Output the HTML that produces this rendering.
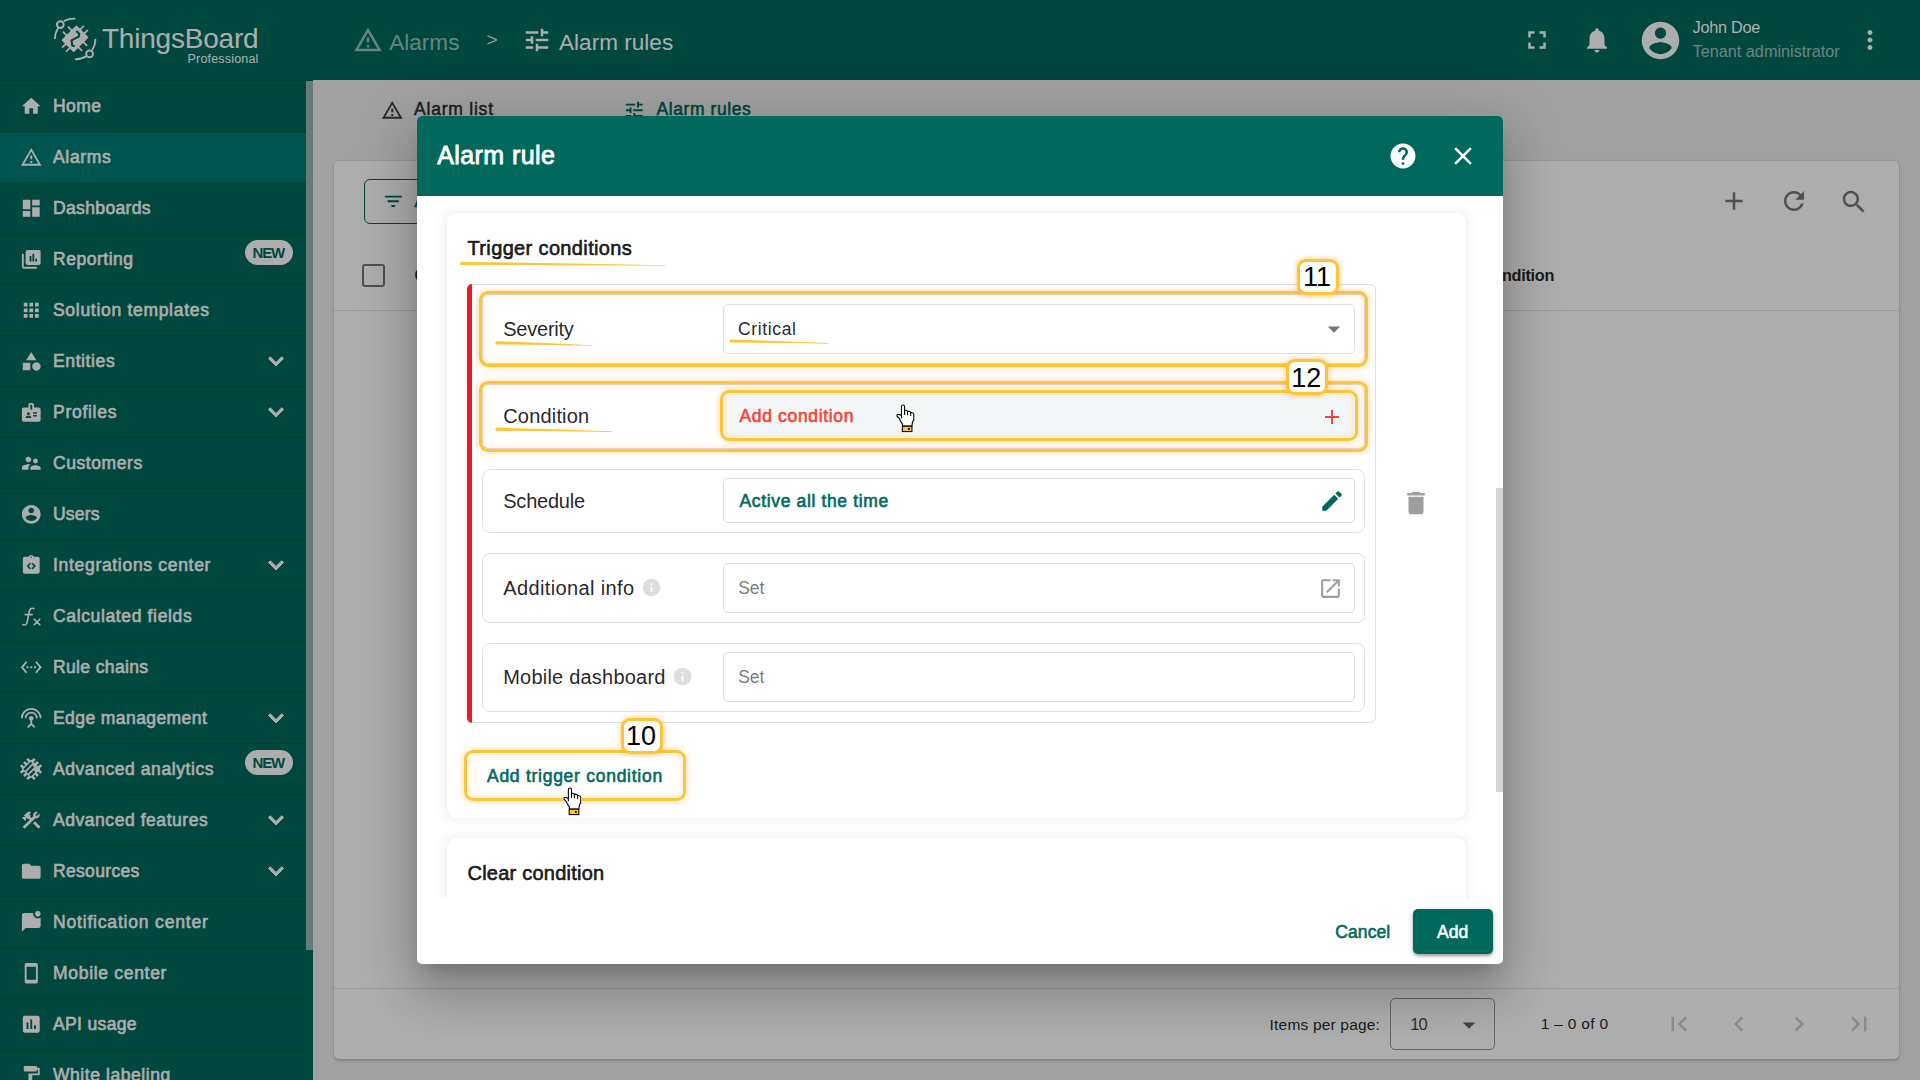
<!DOCTYPE html>
<html lang="en"><head><meta charset="utf-8"><title>ThingsBoard - Alarm rule</title>
<style>html,body{margin:0;padding:0}body{width:1920px;height:1080px;overflow:hidden;position:relative;background:#eee;font-family:"Liberation Sans",Arial,sans-serif}
.t{position:absolute;white-space:nowrap;line-height:1;display:block}
.b{position:absolute}.i{position:absolute;display:block;overflow:visible}
#base,#dlg,#ann,#bd{position:absolute;left:0;top:0;width:1920px;height:1080px;overflow:hidden}
#bd{background:rgba(0,0,0,.32)}
#dshadow{position:absolute;left:417px;top:116px;width:1086px;height:847.75px;border-radius:5px;background:#fff;box-shadow:0 14px 19px -9px rgba(0,0,0,.2),0 30px 48px 4px rgba(0,0,0,.14),0 11px 58px 10px rgba(0,0,0,.12)}</style></head><body>
<div id="base">
<div class="b" style="left:0.00px;top:0.00px;width:1920.00px;height:1080.00px;background:#eee;"></div>
<div class="b" style="left:0.00px;top:0.00px;width:1920.00px;height:80.00px;background:#00695c;"></div>
<div class="b" style="left:0.00px;top:80.00px;width:313.00px;height:1000.00px;background:#00695c;"></div>
<svg class="i" style="left:46px;top:10px;width:60px;height:60px" viewBox="46 10 60 60">
<g fill="none" stroke="#fff" stroke-width="1.900" stroke-linecap="round">
<circle cx="60.300" cy="24.600" r="3.400"/><circle cx="89.600" cy="53.900" r="3.400"/>
<path d="M64.400 20.900 A20.300 20.300 0 0 1 74.600 18.600"/>
<path d="M57.800 28.400 A20.300 20.300 0 0 0 54.900 38.300"/>
<path d="M92.500 49.600 A20.300 20.300 0 0 0 95.400 39.700"/>
<path d="M85.800 56.600 A20.300 20.300 0 0 1 75.700 59.200"/>
</g>
<g transform="translate(75 38.750) rotate(-45)">
<rect x="-10.600" y="-8.700" width="21.200" height="17.400" rx="1.200" fill="#fff"/>
<path stroke="#fff" stroke-width="1.700" stroke-linecap="round" d="M-3.600 -8v-4.900M3.600 -8v-4.900M-3.600 8v4.900M3.600 8v4.900M10 -2.850h4.800M10 2.850h4.800M-10 -2.850h-4.800M-10 2.850h-4.800"/>
</g>
<path d="M76.900 31.600 L79.200 33.800 L78.700 36.600 L71.500 40.400 L72.200 45.400 L73.800 46" fill="none" stroke="#00695c" stroke-width="2.100" stroke-linecap="round" stroke-linejoin="round"/>
</svg>
<span class="t" id="t1" style="left:101.90px;top:25.00px;font-size:28px;color:#fff;letter-spacing:-0.206px;">ThingsBoard</span>
<span class="t" id="t2" style="left:187.50px;top:53.00px;font-size:12.5px;color:#fff;letter-spacing:0.192px;">Professional</span>
<svg class="i" style="left:353.00px;top:24.70px;width:30px;height:30px;" viewBox="0 0 24 24"><path fill="rgba(255,255,255,.6)" d="M12 5.99L19.53 19H4.47L12 5.99M12 2L1 21h22L12 2zm1 14h-2v2h2v-2zm0-6h-2v4h2v-4z"/></svg>
<span class="t" id="t3" style="left:389.30px;top:32.00px;font-size:22.5px;color:rgba(255,255,255,.6);letter-spacing:0.015px;">Alarms</span>
<span class="t" id="t4" style="left:486.40px;top:30.00px;font-size:19px;color:rgba(255,255,255,.85);letter-spacing:-1.423px;">&gt;</span>
<svg class="i" style="left:522.30px;top:24.70px;width:30px;height:30px;" viewBox="0 0 24 24"><path fill="#fff" d="M3 17v2h6v-2H3zM3 5v2h10V5H3zm10 16v-2h8v-2h-8v-2h-2v6h2zM7 9v2H3v2h4v2h2V9H7zm14 4v-2H11v2h10zm-6-4h2V7h4V5h-4V3h-2v6z"/></svg>
<span class="t" id="t5" style="left:559.00px;top:32.00px;font-size:22.5px;color:#fff;letter-spacing:0.040px;">Alarm rules</span>
<svg class="i" style="left:1522.30px;top:24.80px;width:30px;height:30px;" viewBox="0 0 24 24"><path fill="#fff" d="M7 14H5v5h5v-2H7v-3zm-2-4h2V7h3V5H5v5zm12 7h-3v2h5v-5h-2v3zM14 5v2h3v3h2V5h-5z"/></svg>
<svg class="i" style="left:1582.30px;top:25.00px;width:30px;height:30px;" viewBox="0 0 24 24"><path fill="#fff" d="M12 22c1.100 0 2-.9 2-2h-4c0 1.100.890 2 2 2zm6-6v-5c0-3.070-1.640-5.640-4.500-6.320V4c0-.830-.670-1.500-1.500-1.500s-1.500.670-1.500 1.500v.680C7.630 5.360 6 7.920 6 11v5l-2 2v1h16v-1l-2-2z"/></svg>
<svg class="i" style="left:1637.50px;top:18.00px;width:45px;height:45px;" viewBox="0 0 24 24"><path fill="#fff" d="M12 2C6.480 2 2 6.480 2 12s4.480 10 10 10 10-4.480 10-10S17.520 2 12 2zm0 3c1.660 0 3 1.340 3 3s-1.340 3-3 3-3-1.340-3-3 1.340-3 3-3zm0 14.200c-2.500 0-4.710-1.280-6-3.220.030-1.990 4-3.080 6-3.080 1.990 0 5.970 1.090 6 3.080-1.290 1.940-3.500 3.220-6 3.220z"/></svg>
<span class="t" id="t6" style="left:1692.50px;top:19.00px;font-size:16.25px;color:#fff;letter-spacing:-0.236px;">John Doe</span>
<span class="t" id="t7" style="left:1692.50px;top:43.00px;font-size:16.25px;color:rgba(255,255,255,.62);letter-spacing:0.001px;">Tenant administrator</span>
<svg class="i" style="left:1854.70px;top:25.20px;width:30px;height:30px;" viewBox="0 0 24 24"><path fill="#fff" d="M12 8c1.100 0 2-.9 2-2s-.9-2-2-2-2 .9-2 2 .9 2 2 2zm0 2c-1.100 0-2 .9-2 2s.9 2 2 2 2-.9 2-2-.9-2-2-2zm0 6c-1.100 0-2 .9-2 2s.9 2 2 2 2-.9 2-2-.9-2-2-2z"/></svg>
<div class="b" style="left:0.00px;top:131.00px;width:306.00px;height:1.00px;background:rgba(0,0,0,.12);"></div>
<svg class="i" style="left:19.75px;top:94.75px;width:22.5px;height:22.5px;" viewBox="0 0 24 24"><path fill="#fff" d="M10 20v-6h4v6h5v-8h3L12 3 2 12h3v8z"/></svg>
<span class="t" id="t8" style="left:53.00px;top:98.00px;font-size:17.5px;color:#fff;letter-spacing:0.447px;-webkit-text-stroke:0.58px #fff;">Home</span>
<div class="b" style="left:0.00px;top:132.70px;width:306.00px;height:50.30px;background:#007f73;"></div>
<div class="b" style="left:0.00px;top:182.00px;width:306.00px;height:1.00px;background:rgba(0,0,0,.12);"></div>
<svg class="i" style="left:19.75px;top:145.75px;width:22.5px;height:22.5px;" viewBox="0 0 24 24"><path fill="#fff" d="M12 5.99L19.53 19H4.47L12 5.99M12 2L1 21h22L12 2zm1 14h-2v2h2v-2zm0-6h-2v4h2v-4z"/></svg>
<span class="t" id="t9" style="left:53.00px;top:149.00px;font-size:17.5px;color:#fff;letter-spacing:0.681px;-webkit-text-stroke:0.58px #fff;">Alarms</span>
<div class="b" style="left:0.00px;top:233.00px;width:306.00px;height:1.00px;background:rgba(0,0,0,.12);"></div>
<svg class="i" style="left:19.75px;top:196.75px;width:22.5px;height:22.5px;" viewBox="0 0 24 24"><path fill="#fff" d="M3 13h8V3H3v10zm0 8h8v-6H3v6zm10 0h8V11h-8v10zm0-18v6h8V3h-8z"/></svg>
<span class="t" id="t10" style="left:53.00px;top:200.00px;font-size:17.5px;color:#fff;letter-spacing:0.361px;-webkit-text-stroke:0.58px #fff;">Dashboards</span>
<div class="b" style="left:0.00px;top:284.00px;width:306.00px;height:1.00px;background:rgba(0,0,0,.12);"></div>
<svg class="i" style="left:19.75px;top:247.75px;width:22.5px;height:22.5px;" viewBox="0 0 24 24"><path fill="#fff" fill-rule="evenodd" d="M4 6H2v14c0 1.1.9 2 2 2h14v-2H4V6z M20 2H8c-1.1 0-2 .9-2 2v12c0 1.1.9 2 2 2h12c1.1 0 2-.9 2-2V4c0-1.1-.9-2-2-2z M10.2 8.5h2v6h-2z M13.2 6h2v8.500h-2z M16.2 11.5h2v3h-2z"/></svg>
<span class="t" id="t11" style="left:53.00px;top:251.00px;font-size:17.5px;color:#fff;letter-spacing:0.519px;-webkit-text-stroke:0.58px #fff;">Reporting</span>
<div class="b" style="left:244.70px;top:240.00px;width:48.60px;height:24.50px;background:#fff;border-radius:13px;"></div>
<span class="t" id="t12" style="left:252.50px;top:245.00px;font-size:15px;color:#00695c;letter-spacing:-1.121px;font-weight:700;">NEW</span>
<div class="b" style="left:0.00px;top:335.00px;width:306.00px;height:1.00px;background:rgba(0,0,0,.12);"></div>
<svg class="i" style="left:19.75px;top:298.75px;width:22.5px;height:22.5px;" viewBox="0 0 24 24"><path fill="#fff" d="M4 8h4V4H4v4zm6 12h4v-4h-4v4zm-6 0h4v-4H4v4zm0-6h4v-4H4v4zm6 0h4v-4h-4v4zm6-10v4h4V4h-4zm-6 4h4V4h-4v4zm6 6h4v-4h-4v4zm0 6h4v-4h-4v4z"/></svg>
<span class="t" id="t13" style="left:53.00px;top:302.00px;font-size:17.5px;color:#fff;letter-spacing:0.701px;-webkit-text-stroke:0.58px #fff;">Solution templates</span>
<div class="b" style="left:0.00px;top:386.00px;width:306.00px;height:1.00px;background:rgba(0,0,0,.12);"></div>
<svg class="i" style="left:19.75px;top:349.75px;width:22.5px;height:22.5px;" viewBox="0 0 24 24"><path fill="#fff" d="M12 2l-5.500 9h11z M17.500 13a4.500 4.500 0 1 0 .001 0z M3 13.500h8v8H3z"/></svg>
<span class="t" id="t14" style="left:53.00px;top:353.00px;font-size:17.5px;color:#fff;letter-spacing:0.614px;-webkit-text-stroke:0.58px #fff;">Entities</span>
<svg class="i" style="left:260.75px;top:346.10px;width:30px;height:30px;stroke:#fff;stroke-width:.8px;" viewBox="0 0 24 24"><path fill="#fff" d="M16.590 8.590L12 13.170 7.410 8.590 6 10l6 6 6-6z"/></svg>
<div class="b" style="left:0.00px;top:437.00px;width:306.00px;height:1.00px;background:rgba(0,0,0,.12);"></div>
<svg class="i" style="left:19.75px;top:400.75px;width:22.5px;height:22.5px;" viewBox="0 0 24 24"><path fill="#fff" d="M20 7h-5V4c0-1.100-.9-2-2-2h-2c-1.100 0-2 .9-2 2v3H4c-1.100 0-2 .9-2 2v11c0 1.100.9 2 2 2h16c1.100 0 2-.9 2-2V9c0-1.100-.9-2-2-2zM9 12c.830 0 1.500.670 1.500 1.500S9.830 15 9 15s-1.500-.670-1.500-1.500S8.170 12 9 12zm3 6H6v-.750c0-1 2-1.500 3-1.500s3 .5 3 1.500V18zm1-9h-2V4h2v5zm5 7.500h-4V15h4v1.500zm0-3h-4V12h4v1.500z"/></svg>
<span class="t" id="t15" style="left:53.00px;top:404.00px;font-size:17.5px;color:#fff;letter-spacing:0.719px;-webkit-text-stroke:0.58px #fff;">Profiles</span>
<svg class="i" style="left:260.75px;top:397.10px;width:30px;height:30px;stroke:#fff;stroke-width:.8px;" viewBox="0 0 24 24"><path fill="#fff" d="M16.590 8.590L12 13.170 7.410 8.590 6 10l6 6 6-6z"/></svg>
<div class="b" style="left:0.00px;top:488.00px;width:306.00px;height:1.00px;background:rgba(0,0,0,.12);"></div>
<svg class="i" style="left:19.75px;top:451.75px;width:22.5px;height:22.5px;" viewBox="0 0 24 24"><path fill="#fff" d="M16.500 12c1.380 0 2.490-1.120 2.490-2.500S17.880 7 16.500 7C15.120 7 14 8.120 14 9.500s1.120 2.500 2.500 2.500zM9 11c1.660 0 2.990-1.340 2.990-3S10.660 5 9 5C7.340 5 6 6.340 6 8s1.340 3 3 3zm7.500 3c-1.830 0-5.500.920-5.500 2.750V19h11v-2.250c0-1.830-3.670-2.750-5.500-2.750zM9 13c-2.330 0-7 1.170-7 3.500V19h7v-2.250c0-.850.330-2.340 2.370-3.470C10.500 13.100 9.660 13 9 13z"/></svg>
<span class="t" id="t16" style="left:53.00px;top:455.00px;font-size:17.5px;color:#fff;letter-spacing:0.576px;-webkit-text-stroke:0.58px #fff;">Customers</span>
<div class="b" style="left:0.00px;top:539.00px;width:306.00px;height:1.00px;background:rgba(0,0,0,.12);"></div>
<svg class="i" style="left:19.75px;top:502.75px;width:22.5px;height:22.5px;" viewBox="0 0 24 24"><path fill="#fff" d="M12 2C6.480 2 2 6.480 2 12s4.480 10 10 10 10-4.480 10-10S17.520 2 12 2zm0 3c1.660 0 3 1.340 3 3s-1.340 3-3 3-3-1.340-3-3 1.340-3 3-3zm0 14.200c-2.500 0-4.710-1.280-6-3.220.030-1.990 4-3.080 6-3.080 1.990 0 5.970 1.090 6 3.080-1.290 1.940-3.500 3.220-6 3.220z"/></svg>
<span class="t" id="t17" style="left:53.00px;top:506.00px;font-size:17.5px;color:#fff;letter-spacing:0.177px;-webkit-text-stroke:0.58px #fff;">Users</span>
<div class="b" style="left:0.00px;top:590.00px;width:306.00px;height:1.00px;background:rgba(0,0,0,.12);"></div>
<svg class="i" style="left:19.75px;top:553.75px;width:22.5px;height:22.5px;" viewBox="0 0 24 24"><path fill="#fff" fill-rule="evenodd" d="M19 3h-4.180C14.400 1.840 13.300 1 12 1s-2.400.840-2.820 2H5c-1.100 0-2 .9-2 2v14c0 1.100.9 2 2 2h14c1.100 0 2-.9 2-2V5c0-1.100-.9-2-2-2zM12 2.750c.41 0 .75.340.75.750s-.34.750-.75.750-.75-.340-.75-.750.340-.750.750-.750z M10.600 9.300 7 12.900l3.600 3.600 1.200-1.200-2.400-2.400 2.400-2.400z M13.400 9.300 17 12.900l-3.600 3.600-1.200-1.200 2.400-2.400-2.400-2.400z"/></svg>
<span class="t" id="t18" style="left:53.00px;top:557.00px;font-size:17.5px;color:#fff;letter-spacing:0.691px;-webkit-text-stroke:0.58px #fff;">Integrations center</span>
<svg class="i" style="left:260.75px;top:550.10px;width:30px;height:30px;stroke:#fff;stroke-width:.8px;" viewBox="0 0 24 24"><path fill="#fff" d="M16.590 8.590L12 13.170 7.410 8.590 6 10l6 6 6-6z"/></svg>
<div class="b" style="left:0.00px;top:641.00px;width:306.00px;height:1.00px;background:rgba(0,0,0,.12);"></div>
<svg class="i" style="left:20px;top:604.50px;width:23px;height:23px" viewBox="0 0 23 23"><g fill="none" stroke="#fff" stroke-width="1.600" stroke-linecap="round"><path d="M13.800 3.600c-2.600-1-4 .4-4.500 2.800L7.200 17.200c-.5 2.300-2 3.300-4.300 2.400"/><path d="M5.200 9.600h7"/><path d="M14.200 14.200l5.600 5.600M19.800 14.200l-5.600 5.600"/></g></svg>
<span class="t" id="t19" style="left:53.00px;top:608.00px;font-size:17.5px;color:#fff;letter-spacing:0.642px;-webkit-text-stroke:0.58px #fff;">Calculated fields</span>
<div class="b" style="left:0.00px;top:692.00px;width:306.00px;height:1.00px;background:rgba(0,0,0,.12);"></div>
<svg class="i" style="left:19.75px;top:655.75px;width:22.5px;height:22.5px;" viewBox="0 0 24 24"><path fill="#fff" d="M7.770 6.760L6.230 5.480.820 12l5.410 6.520 1.540-1.280L3.420 12l4.350-5.240zM7 13h2v-2H7v2zm10-2h-2v2h2v-2zm-6 2h2v-2h-2v2zm6.770-7.520l-1.540 1.280L20.580 12l-4.350 5.240 1.540 1.280L23.180 12l-5.410-6.520z"/></svg>
<span class="t" id="t20" style="left:53.00px;top:659.00px;font-size:17.5px;color:#fff;letter-spacing:0.363px;-webkit-text-stroke:0.58px #fff;">Rule chains</span>
<div class="b" style="left:0.00px;top:743.00px;width:306.00px;height:1.00px;background:rgba(0,0,0,.12);"></div>
<svg class="i" style="left:19.75px;top:706.75px;width:22.5px;height:22.5px;" viewBox="0 0 24 24"><path fill="#fff" d="M12 5c-3.870 0-7 3.130-7 7h2c0-2.760 2.240-5 5-5s5 2.240 5 5h2c0-3.870-3.130-7-7-7zm1 9.290c.880-.390 1.500-1.260 1.500-2.290 0-1.380-1.120-2.500-2.500-2.500S9.500 10.620 9.500 12c0 1.020.620 1.900 1.500 2.290v3.300L7.590 21 9 22.410l3-3 3 3L16.410 21 13 17.590v-3.300zM12 1C5.930 1 1 5.930 1 12h2c0-4.970 4.030-9 9-9s9 4.030 9 9h2c0-6.070-4.930-11-11-11z"/></svg>
<span class="t" id="t21" style="left:53.00px;top:710.00px;font-size:17.5px;color:#fff;letter-spacing:0.422px;-webkit-text-stroke:0.58px #fff;">Edge management</span>
<svg class="i" style="left:260.75px;top:703.10px;width:30px;height:30px;stroke:#fff;stroke-width:.8px;" viewBox="0 0 24 24"><path fill="#fff" d="M16.590 8.590L12 13.170 7.410 8.590 6 10l6 6 6-6z"/></svg>
<div class="b" style="left:0.00px;top:794.00px;width:306.00px;height:1.00px;background:rgba(0,0,0,.12);"></div>
<svg class="i" style="left:19.20px;top:757.00px;width:24px;height:24px" viewBox="-12 -12 24 24"><g transform="rotate(-45)" fill="#fff"><rect x="-6.750" y="-6.750" width="13.500" height="13.500" rx="1"/><rect x="6" y="-5.8" width="3.900" height="2.600"/><rect x="-9.900" y="-5.8" width="3.900" height="2.600"/><rect y="6" x="-5.8" height="3.900" width="2.600"/><rect y="-9.900" x="-5.8" height="3.900" width="2.600"/><rect x="6" y="-1.3" width="3.900" height="2.600"/><rect x="-9.900" y="-1.3" width="3.900" height="2.600"/><rect y="6" x="-1.3" height="3.900" width="2.600"/><rect y="-9.900" x="-1.3" height="3.900" width="2.600"/><rect x="6" y="3.2" width="3.900" height="2.600"/><rect x="-9.900" y="3.2" width="3.900" height="2.600"/><rect y="6" x="3.2" height="3.900" width="2.600"/><rect y="-9.900" x="3.2" height="3.900" width="2.600"/><g fill="#00695c"><rect x="-5.400" y="-5.300" width="10.400" height="2.300"/><rect x="-5.400" y="-1.300" width="9" height="2.300"/><rect x="-5.400" y="2.800" width="6.400" height="2.300"/></g></g></svg>
<span class="t" id="t22" style="left:53.00px;top:761.00px;font-size:17.5px;color:#fff;letter-spacing:0.569px;-webkit-text-stroke:0.58px #fff;">Advanced analytics</span>
<div class="b" style="left:244.70px;top:750.00px;width:48.60px;height:24.50px;background:#fff;border-radius:13px;"></div>
<span class="t" id="t23" style="left:252.50px;top:755.00px;font-size:15px;color:#00695c;letter-spacing:-1.121px;font-weight:700;">NEW</span>
<div class="b" style="left:0.00px;top:845.00px;width:306.00px;height:1.00px;background:rgba(0,0,0,.12);"></div>
<svg class="i" style="left:19.75px;top:808.75px;width:22.5px;height:22.5px;" viewBox="0 0 24 24"><path fill="#fff" d="M13.783 15.172l2.121-2.121 5.996 5.996-2.121 2.121zM17.500 10c1.930 0 3.500-1.570 3.500-3.500 0-.580-.160-1.120-.410-1.600l-2.700 2.700-1.490-1.490 2.700-2.700c-.480-.250-1.020-.410-1.600-.410C15.570 3 14 4.570 14 6.500c0 .410.080.8.210 1.160l-1.850 1.850-1.780-1.780.710-.710-1.410-1.410L12 3.490c-1.170-1.170-3.070-1.170-4.240 0L4.220 7.030l1.410 1.410H2.810l-.710.710 3.540 3.540.710-.710V9.150l1.410 1.410.710-.710 1.780 1.780-7.410 7.410 2.120 2.120L16.340 9.790c.360.130.750.210 1.160.210z"/></svg>
<span class="t" id="t24" style="left:53.00px;top:812.00px;font-size:17.5px;color:#fff;letter-spacing:0.550px;-webkit-text-stroke:0.58px #fff;">Advanced features</span>
<svg class="i" style="left:260.75px;top:805.10px;width:30px;height:30px;stroke:#fff;stroke-width:.8px;" viewBox="0 0 24 24"><path fill="#fff" d="M16.590 8.590L12 13.170 7.410 8.590 6 10l6 6 6-6z"/></svg>
<div class="b" style="left:0.00px;top:896.00px;width:306.00px;height:1.00px;background:rgba(0,0,0,.12);"></div>
<svg class="i" style="left:19.75px;top:859.75px;width:22.5px;height:22.5px;" viewBox="0 0 24 24"><path fill="#fff" d="M10 4H4c-1.100 0-1.990.9-1.990 2L2 18c0 1.100.9 2 2 2h16c1.100 0 2-.9 2-2V8c0-1.100-.9-2-2-2h-8l-2-2z"/></svg>
<span class="t" id="t25" style="left:53.00px;top:863.00px;font-size:17.5px;color:#fff;letter-spacing:0.334px;-webkit-text-stroke:0.58px #fff;">Resources</span>
<svg class="i" style="left:260.75px;top:856.10px;width:30px;height:30px;stroke:#fff;stroke-width:.8px;" viewBox="0 0 24 24"><path fill="#fff" d="M16.590 8.590L12 13.170 7.410 8.590 6 10l6 6 6-6z"/></svg>
<div class="b" style="left:0.00px;top:947.00px;width:306.00px;height:1.00px;background:rgba(0,0,0,.12);"></div>
<svg class="i" style="left:19.75px;top:910.75px;width:22.5px;height:22.5px;" viewBox="0 0 24 24"><path fill="#fff" d="M22 6.980V16c0 1.100-.9 2-2 2H6l-4 4V4c0-1.100.9-2 2-2h10.100c-.060.320-.100.660-.100 1 0 2.760 2.240 5 5 5 1.130 0 2.160-.390 3-1.020zM16 3c0 1.660 1.340 3 3 3s3-1.340 3-3-1.340-3-3-3-3 1.340-3 3z"/></svg>
<span class="t" id="t26" style="left:53.00px;top:914.00px;font-size:17.5px;color:#fff;letter-spacing:0.820px;-webkit-text-stroke:0.58px #fff;">Notification center</span>
<div class="b" style="left:0.00px;top:998.00px;width:306.00px;height:1.00px;background:rgba(0,0,0,.12);"></div>
<svg class="i" style="left:19.75px;top:961.75px;width:22.5px;height:22.5px;" viewBox="0 0 24 24"><path fill="#fff" d="M17 1.010L7 1c-1.100 0-2 .9-2 2v18c0 1.100.9 2 2 2h10c1.100 0 2-.9 2-2V3c0-1.100-.9-1.990-2-1.990zM17 19H7V5h10v14z"/></svg>
<span class="t" id="t27" style="left:53.00px;top:965.00px;font-size:17.5px;color:#fff;letter-spacing:0.695px;-webkit-text-stroke:0.58px #fff;">Mobile center</span>
<div class="b" style="left:0.00px;top:1049.00px;width:306.00px;height:1.00px;background:rgba(0,0,0,.12);"></div>
<svg class="i" style="left:19.75px;top:1012.75px;width:22.5px;height:22.5px;" viewBox="0 0 24 24"><path fill="#fff" d="M19 3H5c-1.100 0-2 .9-2 2v14c0 1.100.9 2 2 2h14c1.100 0 2-.9 2-2V5c0-1.100-.9-2-2-2zM9 17H7v-7h2v7zm4 0h-2V7h2v10zm4 0h-2v-4h2v4z"/></svg>
<span class="t" id="t28" style="left:53.00px;top:1016.00px;font-size:17.5px;color:#fff;letter-spacing:0.352px;-webkit-text-stroke:0.58px #fff;">API usage</span>
<div class="b" style="left:0.00px;top:1100.00px;width:306.00px;height:1.00px;background:rgba(0,0,0,.12);"></div>
<svg class="i" style="left:19.75px;top:1063.75px;width:22.5px;height:22.5px;" viewBox="0 0 24 24"><path fill="#fff" d="M18 4V3c0-.550-.450-1-1-1H5c-.550 0-1 .450-1 1v4c0 .550.450 1 1 1h12c.550 0 1-.450 1-1V6h1v4H9v11c0 .550.450 1 1 1h2c.550 0 1-.450 1-1v-9h8V4h-3z"/></svg>
<span class="t" id="t29" style="left:53.00px;top:1067.00px;font-size:17.5px;color:#fff;letter-spacing:0.561px;-webkit-text-stroke:0.58px #fff;">White labeling</span>
<div class="b" style="left:306.00px;top:81.00px;width:7.00px;height:869.00px;background:#96b6b2;"></div>
<div class="b" style="left:0.00px;top:80.00px;width:313.00px;height:1.00px;background:rgba(0,0,0,.12);"></div>
<svg class="i" style="left:380.75px;top:98.95px;width:22.5px;height:22.5px;" viewBox="0 0 24 24"><path fill="rgba(0,0,0,.76)" d="M12 5.99L19.53 19H4.47L12 5.99M12 2L1 21h22L12 2zm1 14h-2v2h2v-2zm0-6h-2v4h2v-4z"/></svg>
<span class="t" id="t30" style="left:414.00px;top:101.00px;font-size:17.5px;color:rgba(0,0,0,.76);letter-spacing:0.783px;-webkit-text-stroke:0.58px rgba(0,0,0,.76);">Alarm list</span>
<svg class="i" style="left:623.45px;top:98.95px;width:22.5px;height:22.5px;" viewBox="0 0 24 24"><path fill="#00695c" d="M3 17v2h6v-2H3zM3 5v2h10V5H3zm10 16v-2h8v-2h-8v-2h-2v6h2zM7 9v2H3v2h4v2h2V9H7zm14 4v-2H11v2h10zm-6-4h2V7h4V5h-4V3h-2v6z"/></svg>
<span class="t" id="t31" style="left:656.50px;top:101.00px;font-size:17.5px;color:#00695c;letter-spacing:0.571px;-webkit-text-stroke:0.58px #00695c;">Alarm rules</span>
<div class="b" style="left:575.00px;top:134.50px;width:243.00px;height:2.50px;background:#00695c;"></div>
<div class="b" style="left:333.50px;top:160.50px;width:1565.80px;height:898.90px;background:#fff;border-radius:5px;box-shadow:0 0 0 1px rgba(0,0,0,.04),0 2px 2px rgba(0,0,0,.10),0 1px 4px rgba(0,0,0,.10);"></div>
<div class="b" style="left:364.00px;top:179.00px;width:156.00px;height:45.00px;border:1.250px solid #00695c;border-radius:6px;box-sizing:border-box;"></div>
<svg class="i" style="left:382.05px;top:189.55px;width:22.5px;height:22.5px;" viewBox="0 0 24 24"><path fill="#00695c" d="M10 18h4v-2h-4v2zM3 6v2h18V6H3zm3 7h12v-2H6v2z"/></svg>
<span class="t" id="t32" style="left:414.40px;top:193.00px;font-size:17.5px;color:#00695c;letter-spacing:0.000px;-webkit-text-stroke:0.58px #00695c;">All: enabled</span>
<svg class="i" style="left:1719.00px;top:186.40px;width:30px;height:30px;" viewBox="0 0 24 24"><path fill="rgba(0,0,0,.54)" d="M19 13h-6v6h-2v-6H5v-2h6V5h2v6h6v2z"/></svg>
<svg class="i" style="left:1779.20px;top:186.40px;width:30px;height:30px;" viewBox="0 0 24 24"><path fill="rgba(0,0,0,.54)" d="M17.650 6.350C16.200 4.900 14.210 4 12 4c-4.420 0-7.990 3.580-7.990 8s3.570 8 7.990 8c3.730 0 6.840-2.550 7.730-6h-2.080c-.820 2.330-3.040 4-5.650 4-3.310 0-6-2.690-6-6s2.690-6 6-6c1.660 0 3.140.690 4.220 1.780L13 11h7V4l-2.350 2.350z"/></svg>
<svg class="i" style="left:1839.20px;top:186.60px;width:30px;height:30px;" viewBox="0 0 24 24"><path fill="rgba(0,0,0,.54)" d="M15.500 14h-.790l-.280-.270C15.410 12.590 16 11.110 16 9.500 16 5.910 13.090 3 9.500 3S3 5.910 3 9.500 5.910 16 9.500 16c1.610 0 3.090-.590 4.230-1.570l.270.280v.790l5 4.990L20.490 19l-4.990-5zm-6 0C7.010 14 5 11.990 5 9.500S7.010 5 9.500 5 14 7.010 14 9.500 11.990 14 9.500 14z"/></svg>
<div class="b" style="left:362.20px;top:264.20px;width:22.90px;height:22.70px;border:2.500px solid rgba(0,0,0,.54);border-radius:3px;box-sizing:border-box;"></div>
<span class="t" id="t33" style="left:414.40px;top:267.00px;font-size:16.25px;color:rgba(0,0,0,.87);letter-spacing:0.000px;font-weight:700;">Created time</span>
<span class="t" id="t34" style="left:1440.00px;top:267.00px;font-size:16.25px;color:rgba(0,0,0,.87);letter-spacing:-0.278px;font-weight:700;">Clear condition</span>
<div class="b" style="left:333.50px;top:310.00px;width:1565.80px;height:1.20px;background:rgba(0,0,0,.12);"></div>
<div class="b" style="left:333.50px;top:987.50px;width:1565.80px;height:1.20px;background:rgba(0,0,0,.12);"></div>
<span class="t" id="t35" style="left:1269.60px;top:1017.00px;font-size:15.5px;color:rgba(0,0,0,.87);letter-spacing:0.186px;">Items per page:</span>
<div class="b" style="left:1390.00px;top:998.25px;width:105.00px;height:51.75px;border:1.250px solid rgba(0,0,0,.42);border-radius:5px;box-sizing:border-box;"></div>
<span class="t" id="t36" style="left:1410.20px;top:1016.00px;font-size:16.5px;color:rgba(0,0,0,.76);letter-spacing:0.000px;letter-spacing:-0.8px;">10</span>
<svg class="i" style="left:1453.80px;top:1010.20px;width:30px;height:30px;" viewBox="0 0 24 24"><path fill="rgba(0,0,0,.6)" d="M7 10l5 5 5-5z"/></svg>
<span class="t" id="t37" style="left:1540.80px;top:1016.00px;font-size:15.5px;color:rgba(0,0,0,.87);letter-spacing:0.290px;">1 &#8211; 0 of 0</span>
<svg class="i" style="left:1664.20px;top:1008.75px;width:30px;height:30px;" viewBox="0 0 24 24"><path fill="rgba(0,0,0,.2)" d="M18.410 16.590L13.820 12l4.590-4.590L17 6l-6 6 6 6zM6 6h2v12H6z"/></svg>
<svg class="i" style="left:1723.80px;top:1008.75px;width:30px;height:30px;" viewBox="0 0 24 24"><path fill="rgba(0,0,0,.2)" d="M15.410 7.410L14 6l-6 6 6 6 1.410-1.410L10.830 12z"/></svg>
<svg class="i" style="left:1783.80px;top:1008.75px;width:30px;height:30px;" viewBox="0 0 24 24"><path fill="rgba(0,0,0,.2)" d="M10 6L8.590 7.410 13.170 12l-4.580 4.590L10 18l6-6z"/></svg>
<svg class="i" style="left:1843.80px;top:1008.75px;width:30px;height:30px;" viewBox="0 0 24 24"><path fill="rgba(0,0,0,.2)" d="M5.590 7.410L10.180 12l-4.590 4.590L7 18l6-6-6-6zM16 6h2v12h-2z"/></svg>
</div>
<div id="bd"></div>
<div id="dlg"><div id="dshadow"></div>
<div class="b" style="left:417.00px;top:116.00px;width:1086.00px;height:80.00px;background:#00695c;border-radius:5px 5px 0 0;"></div>
<span class="t" id="t38" style="left:437.30px;top:143.00px;font-size:25px;color:#fff;letter-spacing:0.397px;-webkit-text-stroke:0.83px #fff;">Alarm rule</span>
<svg class="i" style="left:1388.30px;top:141.00px;width:30px;height:30px;" viewBox="0 0 24 24"><path fill="#fff" d="M12 2C6.480 2 2 6.480 2 12s4.480 10 10 10 10-4.480 10-10S17.520 2 12 2zm1 17h-2v-2h2v2zm2.070-7.750l-.9.920C13.450 12.900 13 13.500 13 15h-2v-.5c0-1.100.450-2.100 1.170-2.830l1.240-1.260c.370-.360.590-.860.590-1.410 0-1.100-.9-2-2-2s-2 .9-2 2H8c0-2.210 1.790-4 4-4s4 1.790 4 4c0 .880-.360 1.680-.930 2.250z"/></svg>
<svg class="i" style="left:1448.40px;top:141.00px;width:30px;height:30px;" viewBox="0 0 24 24"><path fill="#fff" d="M19 6.410L17.590 5 12 10.590 6.410 5 5 6.410 10.590 12 5 17.590 6.410 19 12 13.410 17.590 19 19 17.590 13.410 12z"/></svg>
<div class="b" style="left:417px;top:196px;width:1079px;height:701.5px;overflow:hidden;">
<div class="b" style="left:30.00px;top:17.00px;width:1019.00px;height:604.50px;background:#fff;border-radius:9px;box-shadow:0 0 9px 5px rgba(0,90,80,.05),0 0 3px 1px rgba(0,90,80,.03);"></div>
<div class="b" style="left:30.00px;top:641.50px;width:1019.00px;height:122.50px;background:#fff;border-radius:9px;box-shadow:0 0 9px 5px rgba(0,90,80,.05),0 0 3px 1px rgba(0,90,80,.03);"></div>
</div>
<span class="t" id="t39" style="left:467.50px;top:238.00px;font-size:20px;color:rgba(0,0,0,.87);letter-spacing:0.358px;-webkit-text-stroke:0.66px rgba(0,0,0,.87);">Trigger conditions</span>
<span class="t" id="t40" style="left:467.50px;top:863.00px;font-size:20px;color:rgba(0,0,0,.87);letter-spacing:0.230px;-webkit-text-stroke:0.66px rgba(0,0,0,.87);">Clear condition</span>
<div class="b" style="left:467.00px;top:283.50px;width:909.00px;height:439.90px;border:1.250px solid rgba(0,0,0,.12);border-left:none;border-radius:6px;box-sizing:border-box;"></div>
<div class="b" style="left:467.00px;top:283.50px;width:5.20px;height:439.90px;background:#ea1c2a;border-radius:6px 0 0 6px;"></div>
<div class="b" style="left:482.00px;top:469.00px;width:883.00px;height:64.00px;border:1.250px solid rgba(0,0,0,.12);border-radius:8px;box-sizing:border-box;"></div>
<div class="b" style="left:482.00px;top:553.00px;width:883.00px;height:70.00px;border:1.250px solid rgba(0,0,0,.12);border-radius:8px;box-sizing:border-box;"></div>
<div class="b" style="left:482.00px;top:643.00px;width:883.00px;height:69.00px;border:1.250px solid rgba(0,0,0,.12);border-radius:8px;box-sizing:border-box;"></div>
<div class="b" style="left:723.00px;top:304.20px;width:631.70px;height:49.80px;border:1.250px solid rgba(0,0,0,.13);border-radius:5px;box-sizing:border-box;"></div>
<div class="b" style="left:723.30px;top:394.20px;width:631.00px;height:43.30px;background:#f3f7f7;border-radius:5px;"></div>
<div class="b" style="left:723.00px;top:478.00px;width:631.70px;height:44.80px;border:1.250px solid rgba(0,0,0,.13);border-radius:5px;box-sizing:border-box;"></div>
<div class="b" style="left:723.00px;top:563.00px;width:631.70px;height:49.80px;border:1.250px solid rgba(0,0,0,.13);border-radius:5px;box-sizing:border-box;"></div>
<div class="b" style="left:723.00px;top:652.20px;width:631.70px;height:50.10px;border:1.250px solid rgba(0,0,0,.13);border-radius:5px;box-sizing:border-box;"></div>
<span class="t" id="t41" style="left:503.25px;top:319.00px;font-size:20px;color:rgba(0,0,0,.87);letter-spacing:-0.234px;">Severity</span>
<span class="t" id="t42" style="left:738.00px;top:321.00px;font-size:17.5px;color:rgba(0,0,0,.87);letter-spacing:0.636px;">Critical</span>
<svg class="i" style="left:1318.75px;top:313.60px;width:30px;height:30px;" viewBox="0 0 24 24"><path fill="rgba(0,0,0,.54)" d="M7 10l5 5 5-5z"/></svg>
<span class="t" id="t43" style="left:503.25px;top:406.00px;font-size:20px;color:rgba(0,0,0,.87);letter-spacing:0.176px;">Condition</span>
<span class="t" id="t44" style="left:739.50px;top:408.00px;font-size:17.5px;color:#f44336;letter-spacing:0.655px;-webkit-text-stroke:0.58px #f44336;">Add condition</span>
<svg class="i" style="left:1319.75px;top:404.75px;width:24px;height:24px;" viewBox="0 0 24 24"><path fill="#f44336" d="M19 13h-6v6h-2v-6H5v-2h6V5h2v6h6v2z"/></svg>
<span class="t" id="t45" style="left:503.25px;top:491.00px;font-size:20px;color:rgba(0,0,0,.87);letter-spacing:-0.221px;">Schedule</span>
<span class="t" id="t46" style="left:739.50px;top:493.00px;font-size:17.5px;color:#00695c;letter-spacing:0.641px;-webkit-text-stroke:0.58px #00695c;">Active all the time</span>
<svg class="i" style="left:1318.75px;top:487.50px;width:26px;height:26px;" viewBox="0 0 24 24"><path fill="#00695c" d="M3 17.250V21h3.750L17.810 9.940l-3.750-3.750L3 17.250zM20.710 7.040c.390-.390.390-1.020 0-1.410l-2.340-2.340c-.390-.390-1.020-.390-1.410 0l-1.830 1.830 3.750 3.750 1.830-1.830z"/></svg>
<span class="t" id="t47" style="left:503.25px;top:578.00px;font-size:20px;color:rgba(0,0,0,.87);letter-spacing:0.369px;">Additional info</span>
<svg class="i" style="left:640.75px;top:577.00px;width:21px;height:21px;" viewBox="0 0 24 24"><path fill="rgba(0,0,0,.13)" d="M12 2C6.480 2 2 6.480 2 12s4.480 10 10 10 10-4.480 10-10S17.520 2 12 2zm1 15h-2v-6h2v6zm0-8h-2V7h2v2z"/></svg>
<span class="t" id="t48" style="left:738.25px;top:580.00px;font-size:17.5px;color:rgba(0,0,0,.54);letter-spacing:-0.111px;">Set</span>
<svg class="i" style="left:1318.00px;top:575.75px;width:25px;height:25px;" viewBox="0 0 24 24"><path fill="rgba(0,0,0,.38)" d="M19 19H5V5h7V3H5c-1.110 0-2 .9-2 2v14c0 1.100.890 2 2 2h14c1.100 0 2-.9 2-2v-7h-2v7zM14 3v2h3.590l-9.830 9.830 1.410 1.410L19 6.410V10h2V3h-7z"/></svg>
<span class="t" id="t49" style="left:503.25px;top:667.00px;font-size:20px;color:rgba(0,0,0,.87);letter-spacing:0.210px;">Mobile dashboard</span>
<svg class="i" style="left:672.00px;top:666.25px;width:21px;height:21px;" viewBox="0 0 24 24"><path fill="rgba(0,0,0,.13)" d="M12 2C6.480 2 2 6.480 2 12s4.480 10 10 10 10-4.480 10-10S17.520 2 12 2zm1 15h-2v-6h2v6zm0-8h-2V7h2v2z"/></svg>
<span class="t" id="t50" style="left:738.25px;top:669.00px;font-size:17.5px;color:rgba(0,0,0,.54);letter-spacing:-0.111px;">Set</span>
<svg class="i" style="left:1401.25px;top:488.00px;width:30px;height:30px;" viewBox="0 0 24 24"><path fill="rgba(0,0,0,.38)" d="M6 19c0 1.100.9 2 2 2h8c1.100 0 2-.9 2-2V7H6v12zM19 4h-3.500l-1-1h-5l-1 1H5v2h14V4z"/></svg>
<span class="t" id="t51" style="left:487.00px;top:768.00px;font-size:17.5px;color:#00695c;letter-spacing:0.730px;-webkit-text-stroke:0.58px #00695c;">Add trigger condition</span>
<div class="b" style="left:1495.75px;top:487.50px;width:7.25px;height:304.50px;background:#d3d3d3;"></div>
<span class="t" id="t52" style="left:1335.30px;top:924.00px;font-size:17.5px;color:#00695c;letter-spacing:0.086px;-webkit-text-stroke:0.58px #00695c;">Cancel</span>
<div class="b" style="left:1412.75px;top:909.10px;width:80.45px;height:45.00px;background:#00695c;border-radius:5px;box-shadow:0 2px 3px rgba(0,0,0,.3),0 1px 6px rgba(0,0,0,.15);"></div>
<span class="t" id="t53" style="left:1437.10px;top:924.00px;font-size:17.5px;color:#fff;letter-spacing:0.061px;-webkit-text-stroke:0.58px #fff;">Add</span>
</div>
<div id="ann">
<div class="b" style="left:479.00px;top:290.80px;width:889.20px;height:76.00px;border:3.500px solid #fdc536;border-radius:9px;box-sizing:border-box;box-shadow:inset 0 0 0 1px rgba(0,0,0,.13),0 0 6px 1px rgba(255,150,20,.3),inset 0 0 6px 1px rgba(255,150,20,.22);"></div>
<div class="b" style="left:479.00px;top:380.80px;width:889.20px;height:71.30px;border:3.500px solid #fdc536;border-radius:9px;box-sizing:border-box;box-shadow:inset 0 0 0 1px rgba(0,0,0,.13),0 0 6px 1px rgba(255,150,20,.3),inset 0 0 6px 1px rgba(255,150,20,.22);"></div>
<div class="b" style="left:719.80px;top:390.40px;width:638.00px;height:50.80px;border:3.500px solid #fdc536;border-radius:9px;box-sizing:border-box;box-shadow:0 0 6px 1px rgba(255,150,20,.3),inset 0 0 6px 1px rgba(255,150,20,.22);"></div>
<div class="b" style="left:464.10px;top:749.70px;width:221.90px;height:51.20px;border:3.500px solid #fdc536;border-radius:9px;box-sizing:border-box;box-shadow:0 0 6px 1px rgba(255,150,20,.3),inset 0 0 6px 1px rgba(255,150,20,.22);"></div>
<div class="b" style="left:1297.20px;top:259.00px;width:41.50px;height:35.50px;background:#fff;border:3px solid #fdc536;border-radius:9px;box-sizing:border-box;box-shadow:0 0 5px 1px rgba(255,160,20,.45);"></div>
<span class="t" id="t54" style="left:1303.00px;top:264.00px;font-size:27px;color:#000;letter-spacing:0.000px;">11</span>
<div class="b" style="left:1286.40px;top:359.30px;width:41.50px;height:35.50px;background:#fff;border:3px solid #fdc536;border-radius:9px;box-sizing:border-box;box-shadow:0 0 5px 1px rgba(255,160,20,.45);"></div>
<span class="t" id="t55" style="left:1291.20px;top:365.00px;font-size:27px;color:#000;letter-spacing:0.000px;">12</span>
<div class="b" style="left:621.30px;top:718.20px;width:41.50px;height:35.50px;background:#fff;border:3px solid #fdc536;border-radius:9px;box-sizing:border-box;box-shadow:0 0 5px 1px rgba(255,160,20,.45);"></div>
<span class="t" id="t56" style="left:626.10px;top:723.00px;font-size:27px;color:#000;letter-spacing:0.000px;">10</span>
<svg class="i" style="left:0;top:0;width:1920px;height:1080px" viewBox="0 0 1920 1080"><path fill="#fdc536" d="M461.5 261.9 Q563.65 263.22499999999997 665.8 265.15 L665.8 265.85 Q563.65 265.075 461.5 264.9 A1.5 1.5 0 0 1 461.5 261.9Z"/></svg>
<svg class="i" style="left:0;top:0;width:1920px;height:1080px" viewBox="0 0 1920 1080"><path fill="#fdc536" d="M497 341.2 Q544.8 342.87499999999994 592.6 345.15 L592.6 345.85 Q544.8 344.825 497 344.40000000000003 A1.6 1.6 0 0 1 497 341.2Z"/></svg>
<svg class="i" style="left:0;top:0;width:1920px;height:1080px" viewBox="0 0 1920 1080"><path fill="#fdc536" d="M731 339.4 Q779.4 340.87499999999994 827.8 342.95 L827.8 343.65000000000003 Q779.4 342.825 731 342.6 A1.6 1.6 0 0 1 731 339.4Z"/></svg>
<svg class="i" style="left:0;top:0;width:1920px;height:1080px" viewBox="0 0 1920 1080"><path fill="#fdc536" d="M497 427.59999999999997 Q554.5 429.17499999999995 612 431.34999999999997 L612 432.05 Q554.5 431.125 497 430.8 A1.6 1.6 0 0 1 497 427.59999999999997Z"/></svg>
<svg class="i" style="left:0;top:0;width:1920px;height:1080px" viewBox="0 0 1920 1080"><g transform="translate(880,395) scale(0.041667)">
<path d="M515 560 V275 Q515 240 552 240 Q590 240 590 275 V365 H625 Q660 365 660 392 H700 Q735 392 737 418 H765 Q812 425 812 475 V605 L782 640 L765 745 H770 V882 H532 V745 H540 V700 L500 640 L460 560 L410 510 V468 H470 L515 500 Z" fill="#fff" stroke="#fff" stroke-width="70" stroke-linejoin="round"/>
<path d="M515 560 V275 Q515 240 552 240 Q590 240 590 275 V365 H625 Q660 365 660 392 H700 Q735 392 737 418 H765 Q812 425 812 475 V605 L782 640 L765 745 H540 V700 L500 640 L460 560 L410 510 V468 H470 L515 500" fill="#fff" stroke="#000" stroke-width="26" stroke-linejoin="round"/>
<path d="M590 365 V465 M660 392 V470 M737 418 V492" stroke="#000" stroke-width="26" stroke-linecap="round" fill="none"/>
<rect x="535" y="750" width="232" height="128" fill="#fcc630" stroke="#000" stroke-width="26"/>
<rect x="672" y="792" width="44" height="44" fill="#000"/>
</g><g transform="translate(546.9,778) scale(0.041667)">
<path d="M515 560 V275 Q515 240 552 240 Q590 240 590 275 V365 H625 Q660 365 660 392 H700 Q735 392 737 418 H765 Q812 425 812 475 V605 L782 640 L765 745 H770 V882 H532 V745 H540 V700 L500 640 L460 560 L410 510 V468 H470 L515 500 Z" fill="#fff" stroke="#fff" stroke-width="70" stroke-linejoin="round"/>
<path d="M515 560 V275 Q515 240 552 240 Q590 240 590 275 V365 H625 Q660 365 660 392 H700 Q735 392 737 418 H765 Q812 425 812 475 V605 L782 640 L765 745 H540 V700 L500 640 L460 560 L410 510 V468 H470 L515 500" fill="#fff" stroke="#000" stroke-width="26" stroke-linejoin="round"/>
<path d="M590 365 V465 M660 392 V470 M737 418 V492" stroke="#000" stroke-width="26" stroke-linecap="round" fill="none"/>
<rect x="535" y="750" width="232" height="128" fill="#fcc630" stroke="#000" stroke-width="26"/>
<rect x="672" y="792" width="44" height="44" fill="#000"/>
</g></svg>
</div>
</body></html>
